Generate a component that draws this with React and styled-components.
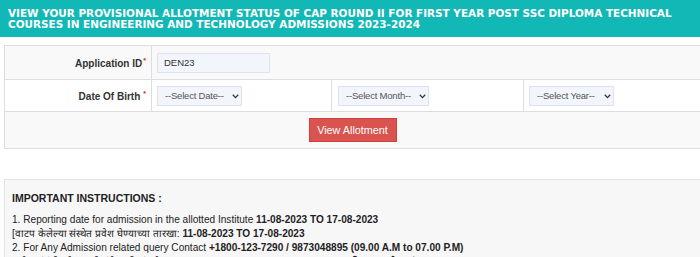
import React from 'react';
import styled, { createGlobalStyle } from 'styled-components';

const GlobalStyle = createGlobalStyle`
  html, body {
    margin: 0;
    padding: 0;
    background: #ffffff;
    overflow: hidden;
  }
  body {
    font-family: "Liberation Sans", Arial, sans-serif;
    font-size: 10px;
    color: #333333;
  }
`;

const Page = styled.div`
  width: 700px;
  display: flex;
  flex-direction: column;
`;

const Banner = styled.div`
  background: #12b8b5;
  height: 37px;
  padding: 8px 8px 0;
  box-sizing: border-box;
`;

const BannerTitle = styled.h1`
  margin: 0;
  color: #ffffff;
  font-family: "DejaVu Sans", Verdana, sans-serif;
  font-weight: bold;
  font-size: 10.45px;
  line-height: 11px;
  white-space: nowrap;
`;

const FormTable = styled.div`
  margin: 8px 0 0 4px;
  width: 698px;
  display: grid;
  grid-template-columns: 147px 180px 192px 1fr;
  border-top: 1px solid #dddddd;
  border-left: 1px solid #dddddd;
`;

const Cell = styled.div`
  display: flex;
  align-items: center;
  justify-content: ${p => (p.$align === 'right' ? 'flex-end' : p.$align === 'center' ? 'center' : 'flex-start')};
  grid-column: ${p => p.$span || 'auto'};
  height: ${p => p.$h}px;
  padding: ${p => (p.$align === 'right' ? '0 5px 0 0' : p.$align === 'center' ? '0' : '0 0 0 5px')};
  box-sizing: content-box;
  background: ${p => (p.$striped ? '#f9f9f9' : '#ffffff')};
  border-right: 1px solid #dddddd;
  border-bottom: 1px solid #dddddd;
`;

const Label = styled.span`
  font-weight: bold;
  font-size: 10px;
  color: #333333;
`;

const Star = styled.sup`
  color: #e02424;
  font-size: 7px;
  margin-left: ${p => (p.$gap ? '3px' : '1px')};
  vertical-align: 4px;
`;

const TextInput = styled.input`
  width: 113px;
  height: 20px;
  box-sizing: border-box;
  padding: 0 6px;
  border: 1px solid #dde3ee;
  background: #f2f5fb;
  font-family: "Liberation Sans", Arial, sans-serif;
  font-size: 9.5px;
  color: #333333;
  outline: none;
`;

const SelectWrap = styled.div`
  position: relative;
  width: ${p => p.$w}px;
  height: 20px;
  margin-left: ${p => p.$ml || 0}px;
`;

const Select = styled.select`
  appearance: none;
  width: 100%;
  height: 100%;
  box-sizing: border-box;
  padding: 0 0 0 7px;
  border: 1px solid #dde3ee;
  border-radius: 0;
  background: #f2f5fb;
  font-family: "Liberation Sans", Arial, sans-serif;
  font-size: 9.5px;
  letter-spacing: -0.2px;
  color: #555555;
  outline: none;
`;

const Chevron = styled.svg`
  position: absolute;
  right: 3px;
  top: 8px;
  pointer-events: none;
`;

const Button = styled.button`
  width: 88px;
  height: 24px;
  border: 1px solid #d43f3a;
  background: #d9534f;
  color: #ffffff;
  font-family: "Liberation Sans", Arial, sans-serif;
  font-size: 10.8px;
  padding: 0;
  margin-right: 2px;
  cursor: pointer;
`;

const Panel = styled.div`
  margin: 30px 0 0 4px;
  width: 710px;
  background: #f7f7f7;
  border: 1px solid #e3e3e3;
  padding: 12px 8px 20px 7px;
  box-sizing: border-box;
`;

const PanelTitle = styled.h4`
  margin: 0 0 8px;
  font-size: 10.5px;
  line-height: 13px;
  font-weight: bold;
  color: #222222;
`;

const Line = styled.p`
  margin: 0;
  font-size: 10.1px;
  line-height: 14px;
  color: #222222;
  white-space: nowrap;
`;

const SelectBox = ({ width, ml, placeholder }) => (
  <SelectWrap $w={width} $ml={ml}>
    <Select defaultValue="">
      <option value="">{placeholder}</option>
    </Select>
    <Chevron width="7" height="5" viewBox="0 0 7 5">
      <path d="M0.8 0.8 L3.5 3.6 L6.2 0.8" fill="none" stroke="#333" strokeWidth="1.3" />
    </Chevron>
  </SelectWrap>
);

export default function App() {
  return (
    <Page>
      <GlobalStyle />
      <Banner>
        <BannerTitle>
          VIEW YOUR PROVISIONAL ALLOTMENT STATUS OF CAP ROUND II FOR FIRST YEAR POST SSC DIPLOMA TECHNICAL
          <br />
          COURSES IN ENGINEERING AND TECHNOLOGY ADMISSIONS 2023-2024
        </BannerTitle>
      </Banner>

      <FormTable>
        <Cell $align="right" $striped $h={33}>
          <Label>Application ID<Star>*</Star></Label>
        </Cell>
        <Cell $span="2 / 5" $striped $h={33}>
          <TextInput defaultValue="DEN23" />
        </Cell>

        <Cell $align="right" $h={31}>
          <Label>Date Of Birth<Star $gap>*</Star></Label>
        </Cell>
        <Cell $h={31}>
          <SelectBox width={85} placeholder="--Select Date--" />
        </Cell>
        <Cell $h={31}>
          <SelectBox width={91} ml={1} placeholder="--Select Month--" />
        </Cell>
        <Cell $h={31}>
          <SelectBox width={85} placeholder="--Select Year--" />
        </Cell>

        <Cell $span="1 / 5" $align="center" $striped $h={36}>
          <Button>View Allotment</Button>
        </Cell>
      </FormTable>

      <Panel>
        <PanelTitle>IMPORTANT INSTRUCTIONS :</PanelTitle>
        <Line>
          1. Reporting date for admission in the allotted Institute <b>11-08-2023 TO 17-08-2023</b>
        </Line>
        <Line>
          [वाटप केलेल्या संस्थेत प्रवेश घेण्याच्या तारखा: <b>11-08-2023 TO 17-08-2023</b>
        </Line>
        <Line>
          2. For Any Admission related query Contact <b>+1800-123-7290 / 9873048895 (09.00 A.M to 07.00 P.M)</b>
        </Line>
        <Line>
          [प्रवेशासंबंधी कोणत्याही शंकेसाठी संपर्क साधा <b>+1800-123-7290 / 9873048895 (सकाळी 09.00 ते सायं 07.00)</b>
        </Line>
      </Panel>
    </Page>
  );
}
